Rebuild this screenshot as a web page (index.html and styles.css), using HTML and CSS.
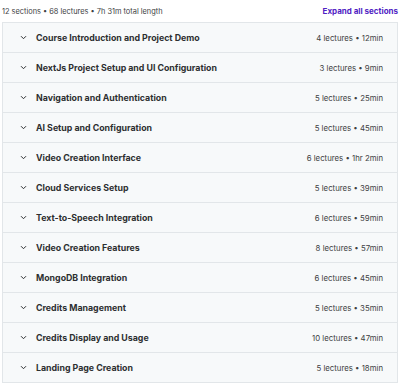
FILE: index.html
```html
<!DOCTYPE html>
<html>
<head>
<meta charset="utf-8">
<link rel="stylesheet" href="styles.css">
</head>
<body>
<div class="page">
  <div class="top">
    <span class="summary">12 sections • 68 lectures • 7h 31m total length</span>
    <span class="expand">Expand all sections</span>
  </div>
  <div class="card">
    <div class="row"><span class="chev"><svg width="7" height="5" viewBox="0 0 7 5"><path d="M1 1.2l2.5 2.5 2.5-2.5" fill="none" stroke="#2d2f31" stroke-width="1"/></svg></span><span class="title">Course Introduction and Project Demo</span><span class="meta">4 lectures • 12min</span></div>
    <div class="row"><span class="chev"><svg width="7" height="5" viewBox="0 0 7 5"><path d="M1 1.2l2.5 2.5 2.5-2.5" fill="none" stroke="#2d2f31" stroke-width="1"/></svg></span><span class="title">NextJs Project Setup and UI Configuration</span><span class="meta">3 lectures • 9min</span></div>
    <div class="row"><span class="chev"><svg width="7" height="5" viewBox="0 0 7 5"><path d="M1 1.2l2.5 2.5 2.5-2.5" fill="none" stroke="#2d2f31" stroke-width="1"/></svg></span><span class="title">Navigation and Authentication</span><span class="meta">5 lectures • 25min</span></div>
    <div class="row"><span class="chev"><svg width="7" height="5" viewBox="0 0 7 5"><path d="M1 1.2l2.5 2.5 2.5-2.5" fill="none" stroke="#2d2f31" stroke-width="1"/></svg></span><span class="title">AI Setup and Configuration</span><span class="meta">5 lectures • 45min</span></div>
    <div class="row"><span class="chev"><svg width="7" height="5" viewBox="0 0 7 5"><path d="M1 1.2l2.5 2.5 2.5-2.5" fill="none" stroke="#2d2f31" stroke-width="1"/></svg></span><span class="title">Video Creation Interface</span><span class="meta">6 lectures • 1hr 2min</span></div>
    <div class="row"><span class="chev"><svg width="7" height="5" viewBox="0 0 7 5"><path d="M1 1.2l2.5 2.5 2.5-2.5" fill="none" stroke="#2d2f31" stroke-width="1"/></svg></span><span class="title">Cloud Services Setup</span><span class="meta">5 lectures • 39min</span></div>
    <div class="row"><span class="chev"><svg width="7" height="5" viewBox="0 0 7 5"><path d="M1 1.2l2.5 2.5 2.5-2.5" fill="none" stroke="#2d2f31" stroke-width="1"/></svg></span><span class="title">Text-to-Speech Integration</span><span class="meta">6 lectures • 59min</span></div>
    <div class="row"><span class="chev"><svg width="7" height="5" viewBox="0 0 7 5"><path d="M1 1.2l2.5 2.5 2.5-2.5" fill="none" stroke="#2d2f31" stroke-width="1"/></svg></span><span class="title">Video Creation Features</span><span class="meta">8 lectures • 57min</span></div>
    <div class="row"><span class="chev"><svg width="7" height="5" viewBox="0 0 7 5"><path d="M1 1.2l2.5 2.5 2.5-2.5" fill="none" stroke="#2d2f31" stroke-width="1"/></svg></span><span class="title">MongoDB Integration</span><span class="meta">6 lectures • 45min</span></div>
    <div class="row"><span class="chev"><svg width="7" height="5" viewBox="0 0 7 5"><path d="M1 1.2l2.5 2.5 2.5-2.5" fill="none" stroke="#2d2f31" stroke-width="1"/></svg></span><span class="title">Credits Management</span><span class="meta">5 lectures • 35min</span></div>
    <div class="row"><span class="chev"><svg width="7" height="5" viewBox="0 0 7 5"><path d="M1 1.2l2.5 2.5 2.5-2.5" fill="none" stroke="#2d2f31" stroke-width="1"/></svg></span><span class="title">Credits Display and Usage</span><span class="meta">10 lectures • 47min</span></div>
    <div class="row"><span class="chev"><svg width="7" height="5" viewBox="0 0 7 5"><path d="M1 1.2l2.5 2.5 2.5-2.5" fill="none" stroke="#2d2f31" stroke-width="1"/></svg></span><span class="title">Landing Page Creation</span><span class="meta">5 lectures • 18min</span></div>
  </div>
</div>
</body>
</html>
```
FILE: styles.css
```css
* { box-sizing: border-box; }
html, body { margin: 0; padding: 0; background: #fff; }
body { font-family: Inter, "Noto Sans", sans-serif; color: #2d2f31; }
.page { padding: 0 2px 0 2px; width: 400px; }
.top { height: 22px; display: flex; align-items: center; justify-content: space-between; }
.summary { font-size: 7.4px; color: #3e4143; }
.expand { font-size: 8px; font-weight: 700; color: #5022c3; }
.card { border: 1px solid #e2e6e9; width: 396px; }
.row { height: 30px; display: flex; align-items: center; background: #f7f9fa; border-bottom: 1px solid #e2e6e9; padding: 0 14px 0 17px; }
.row:last-child { border-bottom: none; height: 29px; }
.chev { width: 16px; display: flex; align-items: center; }
.title { font-size: 8.8px; font-weight: 700; flex: 1; color: #2d2f31; }
.meta { font-size: 7.8px; color: #3e4143; }
```
